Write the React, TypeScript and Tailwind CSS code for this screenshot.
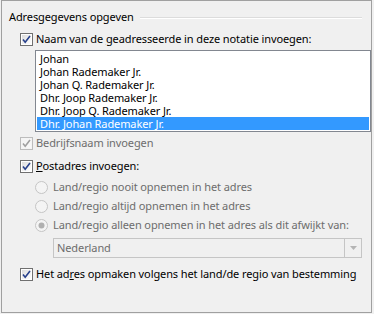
import React from "react";

const names = [
  "Johan",
  "Johan Rademaker Jr.",
  "Johan Q. Rademaker Jr.",
  "Dhr. Joop Rademaker Jr.",
  "Dhr. Joop Q. Rademaker Jr.",
  "Dhr. Johan Rademaker Jr.",
];

function Check({ disabled = false }: { disabled?: boolean }) {
  return (
    <svg width="13" height="13" viewBox="0 0 13 13" className="shrink-0">
      <defs>
        <linearGradient id={disabled ? "cbd" : "cbe"} x1="0" y1="0" x2="1" y2="1">
          <stop offset="0" stopColor={disabled ? "#f4f4f4" : "#dcdcdc"} />
          <stop offset="1" stopColor={disabled ? "#f8f8f8" : "#ffffff"} />
        </linearGradient>
      </defs>
      <rect x="0.5" y="0.5" width="12" height="12" fill={disabled ? "#f4f4f4" : "#ffffff"} stroke={disabled ? "#bcbcbc" : "#707070"} />
      <rect x="2" y="2" width="9" height="9" fill={`url(#${disabled ? "cbd" : "cbe"})`} />
      <path d="M3 6.5 L5.2 9.2 L10 3" fill="none" stroke={disabled ? "#a0a0a0" : "#27408b"} strokeWidth="1.6" />
    </svg>
  );
}

function Radio({ checked = false }: { checked?: boolean }) {
  return (
    <svg width="13" height="13" viewBox="0 0 13 13" className="shrink-0">
      <circle cx="6.5" cy="6.5" r="6" fill="#f4f4f4" stroke="#c4c4c4" />
      {checked && <circle cx="6.5" cy="6.5" r="3" fill="#b0b0b0" />}
    </svg>
  );
}

export default function App() {
  return (
    <div className="w-[374px] h-[314px] bg-[#f0f0f0] font-['Noto_Sans','Open_Sans',sans-serif] text-[11px] tracking-[-0.1px] leading-[16px] text-black">
      <div className="ml-[1px] w-[371px] h-[313px] border border-[#a0a0a0] flex flex-col">
        {/* group header */}
        <div className="mt-[8px] pl-[7px] pr-[9px] h-[15px] flex items-center">
          <span className="whitespace-nowrap">Adresgegevens opgeven</span>
          <div className="flex-1 ml-[6px] mt-[2px] border-t border-[#dcdcdc] border-b border-b-white" />
        </div>

        <div className="mt-[7px] pl-[18px] h-[16px] flex items-center gap-[3px]">
          <Check />
          <span className="whitespace-nowrap">
            Naam van de <u>g</u>eadresseerde in deze notatie invoegen:
          </span>
        </div>

        <div className="mt-[3px] ml-[33px] w-[336px] h-[82px] border border-[#828790] bg-white pt-[1px] px-[1px]">
          {names.map((n, i) => (
            <div
              key={n}
              className={
                i === names.length - 1
                  ? "h-[13px] leading-[13px] pl-[3px] bg-[#3399ff] text-white whitespace-nowrap overflow-hidden"
                  : "h-[13px] leading-[13px] pl-[3px] whitespace-nowrap overflow-hidden"
              }
            >
              {n}
            </div>
          ))}
        </div>

        <div className="mt-[3px] pl-[18px] h-[16px] flex items-center gap-[3px] text-[#6d6d6d]">
          <Check disabled />
          <span className="whitespace-nowrap">Bedrijfsnaam invoegen</span>
        </div>

        <div className="mt-[7px] pl-[18px] h-[16px] flex items-center gap-[3px]">
          <Check />
          <span className="whitespace-nowrap">
            <u>P</u>ostadres invoegen:
          </span>
        </div>

        <div className="mt-[5px] pl-[33px] h-[16px] flex items-center gap-[5px] text-[#6d6d6d]">
          <Radio />
          <span className="whitespace-nowrap">Land/regio nooit opnemen in het adres</span>
        </div>
        <div className="mt-[3px] pl-[33px] h-[16px] flex items-center gap-[5px] text-[#6d6d6d]">
          <Radio />
          <span className="whitespace-nowrap">Land/regio altijd opnemen in het adres</span>
        </div>
        <div className="mt-[3px] pl-[33px] h-[16px] flex items-center gap-[5px] text-[#6d6d6d]">
          <Radio checked />
          <span className="whitespace-nowrap">Land/regio alleen opnemen in het adres als dit afwijkt van:</span>
        </div>

        <div className="mt-[5px] ml-[51px] w-[309px] h-[20px] border border-[#c5c5c5] bg-[#f0f0f0] flex items-center text-[#6d6d6d]">
          <span className="flex-1 pl-[3px] whitespace-nowrap">Nederland</span>
          <div className="w-[17px] h-[18px] border-l border-[#c5c5c5] flex items-center justify-center">
            <svg width="7" height="4" viewBox="0 0 7 4">
              <path d="M0 0 L7 0 L3.5 4 Z" fill="#b4b4b4" />
            </svg>
          </div>
        </div>

        <div className="mt-[8px] pl-[18px] h-[16px] flex items-center gap-[3px]">
          <Check />
          <span className="whitespace-nowrap">
            Het ad<u>r</u>es opmaken volgens het land/de regio van bestemming
          </span>
        </div>
      </div>
    </div>
  );
}
